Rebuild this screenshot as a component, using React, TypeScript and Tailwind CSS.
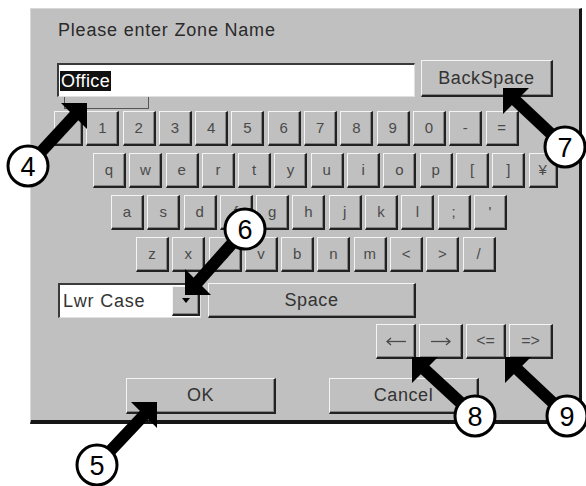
import React from "react";

const font = { fontFamily: '"Liberation Sans", Arial, sans-serif' };

const raised =
  "flex items-center justify-center border-t border-l border-r-2 border-b-2 border-[#222] border-t-[#f4f4f4] border-l-[#f4f4f4] bg-[#c0c0c0] shadow-[inset_-1px_-1px_0_#858585]";

const Key = ({ label, className = "w-[33px]" }: { label: React.ReactNode; className?: string }) => (
  <div className={`${raised} h-[35px] text-[15px] text-[#4a4a4a] ${className}`}>{label}</div>
);

const Button = ({ label, className }: { label: string; className: string }) => (
  <div className={`${raised} text-[18px] tracking-[0.6px] text-[#333] ${className}`}>{label}</div>
);

const Arrow = ({ left }: { left?: boolean }) => (
  <svg width="20" height="9" viewBox="0 0 20 9" className={left ? "" : "rotate-180"}>
    <line x1="1" y1="4.5" x2="20" y2="4.5" stroke="#4a4a4a" strokeWidth="1.3" />
    <polyline points="5,1 1,4.5 5,8" fill="none" stroke="#4a4a4a" strokeWidth="1.3" />
  </svg>
);

const rows: { ml: string; keys: string[] }[] = [
  { ml: "ml-[23px]", keys: ["", "1", "2", "3", "4", "5", "6", "7", "8", "9", "0", "-", "="] },
  { ml: "ml-[62px]", keys: ["q", "w", "e", "r", "t", "y", "u", "i", "o", "p", "[", "]", "¥"] },
  { ml: "ml-[80px]", keys: ["a", "s", "d", "f", "g", "h", "j", "k", "l", ";", "'"] },
  { ml: "ml-[105px]", keys: ["z", "x", "c", "v", "b", "n", "m", "<", ">", "/"] },
];

// callout: circle centre, arrow tip, direction of the head
type Callout = { n: string; cx: number; cy: number; tip: [number, number]; dx: number; dy: number };
const callouts: Callout[] = [
  { n: "4", cx: 28, cy: 166, tip: [87, 103], dx: 1, dy: -1 },
  { n: "5", cx: 97, cy: 465, tip: [157, 402], dx: 1, dy: -1 },
  { n: "6", cx: 245, cy: 229, tip: [185, 295], dx: -1, dy: 1 },
  { n: "7", cx: 565, cy: 147, tip: [503, 88], dx: -1, dy: -1 },
  { n: "8", cx: 475, cy: 416, tip: [412, 357], dx: -1, dy: -1 },
  { n: "9", cx: 567, cy: 416, tip: [505, 357], dx: -1, dy: -1 },
];

const Callouts = () => (
  <svg className="pointer-events-none absolute inset-0" width="586" height="486" viewBox="0 0 586 486">
    {callouts.map((c) => {
      const [tx, ty] = c.tip;
      const L = 26;
      const p1 = [tx - c.dx * L, ty];
      const p2 = [tx, ty - c.dy * L];
      const bx = (p1[0] + p2[0]) / 2;
      const by = (p1[1] + p2[1]) / 2;
      return (
        <g key={c.n}>
          <line x1={c.cx} y1={c.cy} x2={bx + c.dx * 2} y2={by + c.dy * 2} stroke="#000" strokeWidth="12" />
          <polygon points={`${tx},${ty} ${p1[0]},${p1[1]} ${p2[0]},${p2[1]}`} fill="#000" />
          <circle cx={c.cx} cy={c.cy} r="20" fill="#fff" stroke="#000" strokeWidth="3" />
          <text
            x={c.cx}
            y={c.cy + 9.5}
            textAnchor="middle"
            fontSize="27"
            fontFamily='"Liberation Sans", Arial, sans-serif'
            fill="#000"
          >
            {c.n}
          </text>
        </g>
      );
    })}
  </svg>
);

export default function App() {
  return (
    <div className="relative h-[486px] w-[586px] overflow-hidden bg-white" style={font}>
      <div className="ml-[30px] mt-[8px] flex h-[416px] w-[552px] flex-col border-t border-l border-r-[3px] border-b-[4px] border-[#161616] border-t-[#d8d8d8] border-l-[#d8d8d8] bg-[#c0c0c0]">
        <div className="ml-[27px] mt-[10px] h-[22px] text-[18px] leading-[22px] tracking-[0.8px] text-[#2a2a2a]">
          Please enter Zone Name
        </div>

        <div className="mt-[19px] flex items-end">
          <div className="ml-[26px] flex h-[34px] w-[358px] items-center border-t-2 border-l-2 border-[#3a3a3a] border-b border-r border-b-[#e0e0e0] border-r-[#e0e0e0] bg-white pl-px">
            <span className="bg-[#111] px-px text-[18px] leading-[20px] tracking-[0.4px] text-white">Office</span>
          </div>
          <Button label="BackSpace" className="ml-[6px] h-[37px] w-[132px]" />
        </div>

        <div className="ml-[33px] h-[12px] w-[85px] border-l border-r border-b border-[#555]" />

        <div className="mt-[2px] flex flex-col gap-[7px]">
          {rows.map((r, i) => (
            <div key={i} className={`flex gap-[3.3px] ${r.ml}`}>
              {r.keys.map((k, j) => (
                <Key
                  key={j}
                  label={k}
                  className={(i === 0 && j === 0) || k === "¥" ? "w-[29px]" : "w-[33px]"}
                />
              ))}
            </div>
          ))}
        </div>

        <div className="mt-[11px] flex h-[35px] items-stretch">
          <div className="ml-[27px] flex w-[143px] items-stretch border-t-2 border-l-2 border-[#3a3a3a] border-b border-r border-b-[#e0e0e0] border-r-[#e0e0e0] bg-white">
            <div className="flex flex-1 items-center pl-[3px] text-[18px] tracking-[0.8px] text-[#333]">Lwr Case</div>
            <div className={`${raised} my-px w-[28px]`}>
              <svg width="8" height="5" viewBox="0 0 8 5">
                <polygon points="0,0 8,0 4,5" fill="#000" />
              </svg>
            </div>
          </div>
          <Button label="Space" className="ml-[7px] w-[208px]" />
        </div>

        <div className="ml-[345px] mt-[6px] flex h-[35px] gap-[3px]">
          <Key label={<Arrow left />} className="w-[40px]" />
          <Key label={<Arrow />} className="w-[44px]" />
          <Key label="<=" className="w-[40px] text-[16px]" />
          <Key label="=>" className="w-[44px] text-[16px]" />
        </div>

        <div className="mt-[19px] flex h-[36px]">
          <Button label="OK" className="ml-[95px] w-[150px]" />
          <Button label="Cancel" className="ml-[53px] w-[150px]" />
        </div>
      </div>
      <Callouts />
    </div>
  );
}
